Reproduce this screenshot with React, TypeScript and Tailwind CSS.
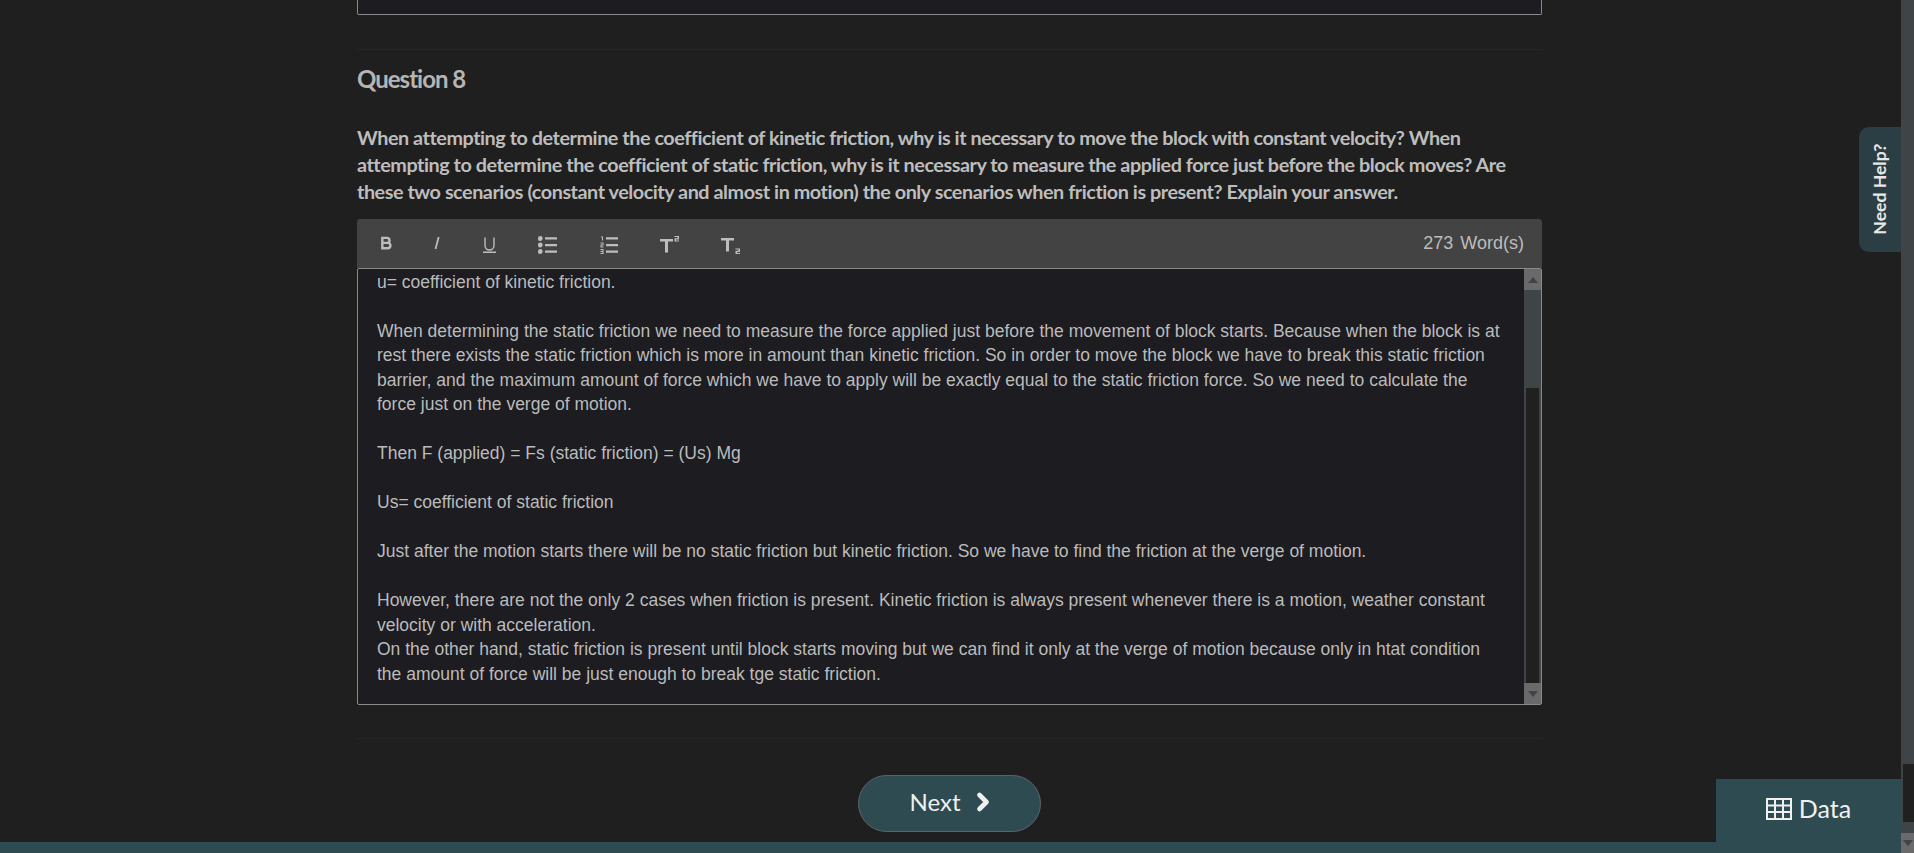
import { ChevronRight } from "lucide-react";

const lato = "font-['Lato',sans-serif]";

function Toolbar() {
  return (
    <div className="flex h-[49px] items-center justify-between rounded-t-[3px] bg-[#434343] pl-[23px] pr-[18px] text-[#bdbdbd]">
      <div className="flex items-center pt-[2px]">
        <svg width="13" height="14" viewBox="0 0 14 14" className="mb-[3px] mr-[41px]" fill="none" stroke="currentColor" strokeWidth="2.6">
          <path d="M2.500 1.500h5a2.700 2.700 0 0 1 0 5.400h-5zM2.500 6.900h5.800a2.900 2.900 0 0 1 0 5.800H2.500z" />
        </svg>
        <svg width="6" height="14" viewBox="0 0 6 14" className="mb-[3px] mr-[43px]" fill="none" stroke="currentColor" strokeWidth="1.8">
          <path d="M4.700 1 1.500 13" />
        </svg>
        <svg width="13" height="16" viewBox="0 0 13 16" className="mr-[42px]" fill="none" stroke="currentColor" strokeWidth="1.4">
          <path d="M2 0.500v8a4.500 4.500 0 0 0 9 0v-8M0 15.300h13" />
        </svg>
        <svg width="19" height="18" viewBox="0 0 19 18" className="mr-[43px]" fill="currentColor">
          <circle cx="2.300" cy="2.500" r="2.400" />
          <circle cx="2.300" cy="9" r="2.400" />
          <circle cx="2.300" cy="15.500" r="2.400" />
          <path d="M7 1.200h12v2.300H7zM7 7.900h12v2.300H7zM7 14.500h12v2.300H7z" />
        </svg>
        <svg width="18" height="18" viewBox="0 0 18 18" className="mr-[42px]" fill="currentColor">
          <path d="M1 .5h2v4H2V1.500H1zM.5 6.500h3v3h-2v1h2v1h-3v-3h2v-1h-2zM.5 13h3v5h-3v-1h2v-1h-2v-1h2v-1h-2z" />
          <path d="M6 1.200h12v2.300H6zM6 7.900h12v2.300H6zM6 14.500h12v2.300H6z" />
        </svg>
        <svg width="19" height="17" viewBox="0 0 19 17" className="mr-[42px]" fill="currentColor">
          <path d="M0 3h13v2.600H8v11H5v-11H0z" />
          <path d="M14.500 0h4.500v3.400h-3v1h3v1.100h-4.500V2.300h3v-1.200h-3z" />
        </svg>
        <svg width="19" height="17" viewBox="0 0 19 17" className="mt-[3px]" fill="currentColor">
          <path d="M0 0h13v2.600H8v11H5v-11H0z" />
          <path d="M14.500 10.500h4.500v3.400h-3v1h3V16h-4.500v-3.200h3v-1.200h-3z" />
        </svg>
      </div>
      <div className="flex gap-[7px] font-['Liberation_Sans',sans-serif] text-[18px]">
        <span>273</span>
        <span>Word(s)</span>
      </div>
    </div>
  );
}

function EditorScrollbar() {
  return (
    <div className="flex w-[17px] shrink-0 flex-col bg-[#3f4446]">
      <div className="flex h-[21px] items-center justify-center bg-[#6a6a6a]">
        <div className="h-0 w-0 border-x-[5px] border-b-[6px] border-x-transparent border-b-[#3f4446]" />
      </div>
      <div className="h-[98px] bg-[#3f4446]" />
      <div className="mx-[2px] flex-1 bg-[#202020]" />
      <div className="flex h-[21px] items-center justify-center bg-[#6a6a6a]">
        <div className="h-0 w-0 border-x-[5px] border-t-[6px] border-x-transparent border-t-[#3f4446]" />
      </div>
    </div>
  );
}

function PageScrollbar() {
  return (
    <div className="flex w-[13px] shrink-0 flex-col bg-[#3f4446]">
      <div className="h-[764px]" />
      <div className="ml-[2px] h-[58px] bg-[#202020]" />
      <div className="h-[11px]" />
      <div className="flex h-[20px] items-center justify-center bg-[#6a6a6a]">
        <div className="h-0 w-0 border-x-[5px] border-t-[6px] border-x-transparent border-t-[#3f4446]" />
      </div>
    </div>
  );
}

export default function App() {
  return (
    <div className="relative flex h-[853px] overflow-hidden bg-[#1f1f1f]">
      <div className="flex min-w-0 flex-1 flex-col">
        <div className="flex-1 pl-[357px]">
          <div className="w-[1185px]">
            <div className="h-[15px] rounded-b-[2px] border border-t-0 border-[#8a8a8a] bg-[#1c1c21]" />
            <div className="mt-[34px] border-t border-[#262626]" />
            <h2 className={`${lato} mt-[14px] text-[24px] leading-[30px] font-bold tracking-[-1px] text-[#b5b5b5]`}>
              Question 8
            </h2>
            <p className={`${lato} mt-[30px] text-[19.800px] leading-[27px] font-bold tracking-[-0.45px] text-[#bdbdbd]`}>
              When attempting to determine the coefficient of kinetic friction, why is it necessary to move the block with constant velocity? When attempting to determine the coefficient of static friction, why is it necessary to measure the applied force just before the block moves? Are these two scenarios (constant velocity and almost in motion) the only scenarios when friction is present? Explain your answer.
            </p>
            <div className="mt-[14px]">
              <Toolbar />
              <div className="flex h-[437px] rounded-[2px] border border-[#8a8a8a] bg-[#1c1c21]">
                <div className="flex-1 overflow-hidden pt-[0.800px] pl-[19px] pr-[18px] font-['Liberation_Sans',sans-serif] text-[17.500px] leading-[24.500px] text-[#bbbbbb]">
                  <p>u= coefficient of kinetic friction.</p>
                  <p className="mt-[24.500px]">
                    When determining the static friction we need to measure the force applied just before the movement of block starts. Because when the block is at rest there exists the static friction which is more in amount than kinetic friction. So in order to move the block we have to break this static friction barrier, and the maximum amount of force which we have to apply will be exactly equal to the static friction force. So we need to calculate the force just on the verge of motion.
                  </p>
                  <p className="mt-[24.500px]">Then F (applied) = Fs (static friction) = (Us) Mg</p>
                  <p className="mt-[24.500px]">Us= coefficient of static friction</p>
                  <p className="mt-[24.500px]">
                    Just after the motion starts there will be no static friction but kinetic friction. So we have to find the friction at the verge of motion.
                  </p>
                  <p className="mt-[24.500px]">
                    However, there are not the only 2 cases when friction is present. Kinetic friction is always present whenever there is a motion, weather constant velocity or with acceleration.
                  </p>
                  <p>
                    On the other hand, static friction is present until block starts moving but we can find it only at the verge of motion because only in htat condition the amount of force will be just enough to break tge static friction.
                  </p>
                </div>
                <EditorScrollbar />
              </div>
            </div>
            <div className="mt-[33px] border-t border-[#262626]" />
          </div>
        </div>
        <div className="flex h-[67px] justify-start pl-[858px]">
          <button className={`${lato} flex h-[57px] w-[183px] items-center justify-center gap-[8px] rounded-full border border-[#5c6466] bg-[#2f4b52] pb-[4px] pl-[7px] text-[24px] text-[#f0f0f0]`}>
            Next
            <ChevronRight size={28} strokeWidth={4} />
          </button>
        </div>
        <div className="h-[11px] bg-[#2f4b52]" />
      </div>
      <PageScrollbar />

      <div className="absolute top-[127px] right-[13px] flex h-[125px] w-[42px] items-center justify-center rounded-l-[10px] bg-[#2b3e44]">
        <span className={`${lato} -rotate-90 text-[17.600px] font-bold whitespace-nowrap text-[#e8e8e8]`}>Need Help?</span>
      </div>

      <div className={`${lato} absolute right-[13px] bottom-0 flex h-[74px] w-[185px] items-center justify-center gap-[7px] bg-[#2f4b52] pb-[14px] text-[25px] text-[#f0f0f0]`}>
        <svg width="26" height="22" viewBox="0 0 26 22" fill="none" stroke="currentColor" strokeWidth="2">
          <path d="M1 1h24v20H1zM1 7.500h24M1 14h24M9 1v20M17 1v20" />
        </svg>
        Data
      </div>
    </div>
  );
}
